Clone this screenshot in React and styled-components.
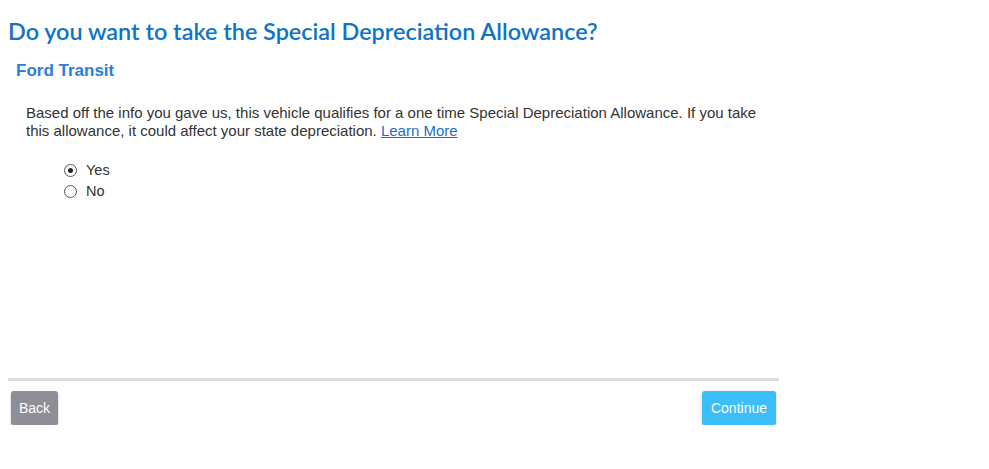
import React, { useState } from "react";
import styled, { createGlobalStyle } from "styled-components";

const GlobalStyle = createGlobalStyle`
  html, body {
    margin: 0;
    padding: 0;
    background: #ffffff;
  }
  body {
    font-family: "Liberation Sans", Arial, sans-serif;
  }
`;

const Page = styled.div`
  width: 771px;
  padding: 0 8px;
  display: flex;
  flex-direction: column;
`;

const Title = styled.h1`
  margin: 16px 0 0;
  font-family: Lato, "Open Sans", sans-serif;
  font-weight: 600;
  font-size: 23.4px;
  line-height: 30px;
  color: #0f74c6;
`;

const Subtitle = styled.h2`
  margin: 14px 0 0 8px;
  font-family: "Liberation Sans", Arial, sans-serif;
  font-weight: bold;
  font-size: 17px;
  line-height: 22px;
  color: #2a7dd8;
`;

const Body = styled.div`
  padding: 0 20px 0 18px;
  min-height: 296px;
`;

const Text = styled.p`
  margin: 22px 0 0;
  font-size: 15px;
  line-height: 18px;
  color: #333333;
`;

const Link = styled.a`
  color: #1a6fc9;
  text-decoration: underline;
  cursor: pointer;
`;

const Options = styled.div`
  margin: 21px 0 0 38px;
  display: flex;
  flex-direction: column;
  gap: 3px;
`;

const Option = styled.label`
  display: flex;
  align-items: center;
  gap: 9px;
  font-size: 14.5px;
  line-height: 18px;
  color: #333333;
  cursor: pointer;
`;

const Radio = styled.span`
  width: 11px;
  height: 11px;
  border-radius: 50%;
  border: 1px solid #555;
  display: flex;
  align-items: center;
  justify-content: center;
  &::after {
    content: "";
    width: 5px;
    height: 5px;
    border-radius: 50%;
    background: ${(p) => (p.$checked ? "#222" : "transparent")};
  }
`;

const Divider = styled.hr`
  margin: 0;
  border: none;
  height: 3px;
  background: #dedede;
`;

const Footer = styled.div`
  display: flex;
  justify-content: space-between;
  padding: 10px 3px 0;
`;

const Button = styled.button`
  height: 34px;
  padding: 0 ${(p) => (p.$primary ? "9px" : "8px")};
  border: none;
  border-radius: 3px;
  font-family: "Liberation Sans", Arial, sans-serif;
  font-size: 14px;
  color: #ffffff;
  background: ${(p) => (p.$primary ? "#3bbefa" : "#8d8e96")};
  box-shadow: 0 1px 2px rgba(0, 0, 0, 0.3);
  cursor: pointer;
`;

export default function App() {
  const [choice, setChoice] = useState("yes");

  return (
    <>
      <GlobalStyle />
      <Page>
        <Title>Do you want to take the Special Depreciation Allowance?</Title>
        <Subtitle>Ford Transit</Subtitle>
        <Body>
          <Text>
            Based off the info you gave us, this vehicle qualifies for a one
            time Special Depreciation Allowance. If you take this allowance, it
            could affect your state depreciation. <Link>Learn More</Link>
          </Text>
          <Options>
            <Option onClick={() => setChoice("yes")}>
              <Radio $checked={choice === "yes"} />
              Yes
            </Option>
            <Option onClick={() => setChoice("no")}>
              <Radio $checked={choice === "no"} />
              No
            </Option>
          </Options>
        </Body>
        <Divider />
        <Footer>
          <Button>Back</Button>
          <Button $primary>Continue</Button>
        </Footer>
      </Page>
    </>
  );
}
